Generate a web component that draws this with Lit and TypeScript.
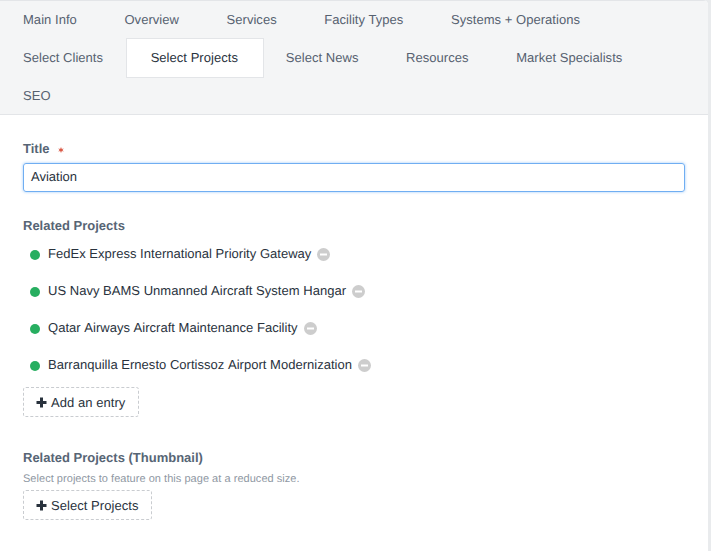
import { LitElement, html, css, svg } from "lit";
import { customElement } from "lit/decorators.js";

const row1 = ["Main Info", "Overview", "Services", "Facility Types", "Systems + Operations"];
const row2 = ["Select Clients", "Select Projects", "Select News", "Resources", "Market Specialists"];
const row3 = ["SEO"];
const projects = [
  "FedEx Express International Priority Gateway",
  "US Navy BAMS Unmanned Aircraft System Hangar",
  "Qatar Airways Aircraft Maintenance Facility",
  "Barranquilla Ernesto Cortissoz Airport Modernization",
];

const plus = svg`<svg class="plus" width="11" height="11" viewBox="0 0 11 11"><path d="M4 .5h3V4h3.500v3H7v3.500H4V7H.5V4H4z" fill="#29323d"/></svg>`;

@customElement("app-root")
export class AppRoot extends LitElement {
  static styles = css`
    :host {
      display: block;
      width: 711px;
      height: 551px;
      overflow: hidden;
      background: #e9ebed;
      font-family: "Liberation Sans", Arial, sans-serif;
      font-size: 13px;
      color: #29323d;
      text-rendering: geometricPrecision;
    }
    .panel {
      width: 708px;
      height: 551px;
      box-sizing: border-box;
      background: #fff;
      border-top-right-radius: 5px;
      overflow: hidden;
    }
    .tabs {
      background: #f4f5f6;
      border-top: 1px solid #e3e5e8;
      border-bottom: 1px solid #e3e5e8;
      height: 115px;
      box-sizing: border-box;
      display: flex;
      flex-direction: column;
    }
    .row {
      display: flex;
      height: 38px;
      flex: none;
    }
    .tab {
      padding: 0 23.6px 0 23px;
      margin-right: 1px;
      line-height: 37px;
      color: #566170;
      white-space: nowrap;
      letter-spacing: 0.04px;
    }
    .tab.on {
      background: #fff;
      color: #29323d;
      border: 1px solid #e3e5e8;
      height: 40px;
      box-sizing: border-box;
      line-height: 37px;
      margin: -1px -1px 0 -2px;
      padding: 0 24.8px 0 24px;
    }
    .body {
      padding: 26px 23px 0;
    }
    .label {
      font-weight: 700;
      color: #576575;
      line-height: 16px;
      display: flex;
      align-items: center;
    }
    .star {
      width: 6px;
      height: 6px;
      margin-left: 8px;
      margin-top: 2px;
    }
    .input {
      margin-top: 6px;
      height: 29px;
      width: 662px;
      box-sizing: border-box;
      border: 1px solid #70aef2;
      border-radius: 3px;
      box-shadow: 0 0 3px rgba(90, 165, 245, 0.6);
      padding: 0 7px;
      line-height: 26px;
      color: #29323d;
    }
    .rel {
      margin-top: 26px;
    }
    ul {
      list-style: none;
      margin: 0;
      padding: 0;
      margin-top: 1px;
    }
    li {
      display: flex;
      align-items: center;
      height: 37px;
      padding-left: 7px;
      font-kerning: none;
      letter-spacing: 0.025px;
    }
    .dot {
      width: 10px;
      height: 10px;
      border-radius: 50%;
      background: #27ae60;
      margin-right: 8px;
      margin-top: 2px;
    }
    .rm {
      margin-left: 6px;
      margin-top: 1px;
      display: block;
    }
    .btn {
      display: inline-flex;
      align-items: center;
      height: 30px;
      box-sizing: border-box;
      border: 1px dashed #c9ccd0;
      border-radius: 3px;
      padding: 0 12.4px 0 12px;
      color: #29323d;
      letter-spacing: 0.05px;
    }
    .plus {
      margin-right: 4px;
    }
    .add {
      margin-top: 4px;
      display: flex;
    }
    .thumb {
      margin-top: 33px;
    }
    .hint {
      font-size: 11px;
      color: #8f98a3;
      line-height: 14px;
      margin-top: 6px;
      margin-bottom: 4px;
      letter-spacing: 0.035px;
    }
  `;

  private tabRow(items: string[]) {
    return html`<div class="row">
      ${items.map((t) => html`<div class="tab ${t === "Select Projects" ? "on" : ""}">${t}</div>`)}
    </div>`;
  }

  render() {
    return html`<div class="panel">
      <div class="tabs">${this.tabRow(row1)}${this.tabRow(row2)}${this.tabRow(row3)}</div>
      <div class="body">
        <div class="label">
          Title
          <svg class="star" viewBox="0 0 6 6"><path d="M3 0l.8 2 2-.6L4.400 3l1.400 1.600-2-.6L3 6l-.8-2-2 .6L1.600 3 .2 1.400l2 .6z" fill="#da5a47"/></svg>
        </div>
        <div class="input">Aviation</div>
        <div class="label rel">Related Projects</div>
        <ul>
          ${projects.map(
            (p) => html`<li>
              <span class="dot"></span>${p}
              <svg class="rm" width="13" height="13" viewBox="0 0 13 13"><circle cx="6.500" cy="6.500" r="6.500" fill="#cdcdcd"/><rect x="3" y="5.500" width="7" height="2" fill="#fff"/></svg>
            </li>`
          )}
        </ul>
        <div class="add"><div class="btn">${plus}Add an entry</div></div>
        <div class="label thumb">Related Projects (Thumbnail)</div>
        <div class="hint">Select projects to feature on this page at a reduced size.</div>
        <div class="btn">${plus}Select Projects</div>
      </div>
    </div>`;
  }
}
